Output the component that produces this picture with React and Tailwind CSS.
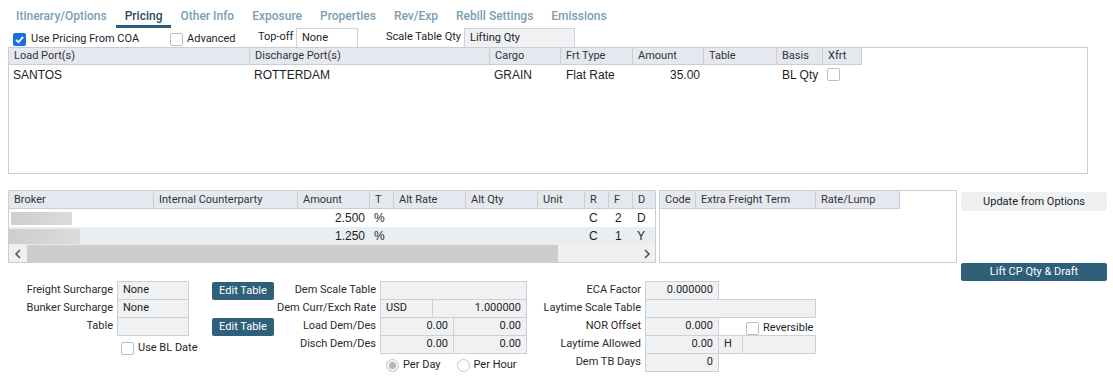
import React from 'react';

const tabs = ['Itinerary/Options', 'Pricing', 'Other Info', 'Exposure', 'Properties', 'Rev/Exp', 'Rebill Settings', 'Emissions'];

const portCols = [
  { label: 'Load Port(s)', w: 'w-[241px]' },
  { label: 'Discharge Port(s)', w: 'w-[240px]' },
  { label: 'Cargo', w: 'w-[71px]' },
  { label: 'Frt Type', w: 'w-[72px]' },
  { label: 'Amount', w: 'w-[71px]' },
  { label: 'Table', w: 'w-[73px]' },
  { label: 'Basis', w: 'w-[46px]' },
  { label: 'Xfrt', w: 'w-[39px]' },
];

const brokerCols = [
  { label: 'Broker', w: 'w-[145px]' },
  { label: 'Internal Counterparty', w: 'w-[144px]' },
  { label: 'Amount', w: 'w-[72px]' },
  { label: 'T', w: 'w-[24px]' },
  { label: 'Alt Rate', w: 'w-[72px]' },
  { label: 'Alt Qty', w: 'w-[72px]' },
  { label: 'Unit', w: 'w-[47px]' },
  { label: 'R', w: 'w-[24px]' },
  { label: 'F', w: 'w-[24px]' },
  { label: 'D', w: 'w-[22px]', last: true },
];

const brokerRows = [
  { blur: 'ml-[2px] w-[61px] h-[13px]', amount: '2.500', r: 'C', f: '2', d: 'D', bg: 'bg-white' },
  { blur: 'w-[71px] h-[15px]', amount: '1.250', r: 'C', f: '1', d: 'Y', bg: 'bg-[#e8eef1]' },
];

const extraCols = [
  { label: 'Code', w: 'w-[36px]' },
  { label: 'Extra Freight Term', w: 'w-[120px]' },
  { label: 'Rate/Lump', w: 'w-[84px]' },
];

const Check = ({ checked, className = '' }) =>
  checked ? (
    <span className={`inline-flex w-[13px] h-[13px] rounded-[2px] bg-[#1a70e2] items-center justify-center shrink-0 ${className}`}>
      <svg width="11" height="11" viewBox="0 0 12 12">
        <path d="M2.2 6.3 L4.9 9 L9.9 3.2" fill="none" stroke="white" strokeWidth="2" />
      </svg>
    </span>
  ) : (
    <span className={`inline-block w-[13px] h-[13px] rounded-[2px] border border-[#b9bec5] bg-white shrink-0 ${className}`} />
  );

const HeaderCell = ({ col }) => (
  <div className={`${col.w} h-full flex items-center pl-[5px] pt-[1px] ${col.last ? '' : 'border-r border-[#c9ced6]'} whitespace-nowrap`}>
    {col.label}
  </div>
);

const Box = ({ w, children, right, first = true }) => (
  <div
    className={`${w} h-[19px] border border-[#cdd1d6] bg-[#f0f1f3] flex items-center px-[5px] text-[#1e1e1e] ${right ? 'justify-end' : ''} ${first ? '' : '-ml-px'}`}
  >
    {children}
  </div>
);

const FormRow = ({ label, lw, children }) => (
  <div className="flex h-[18px] items-start">
    <div className={`${lw} h-[19px] flex items-center justify-end text-[#2a2a2a] whitespace-nowrap`}>{label}</div>
    <div className="ml-[4px] flex items-start">{children}</div>
  </div>
);

const DarkButton = ({ className, children }) => (
  <button className={`bg-[#2f6079] text-white rounded-[2px] flex items-center justify-center ${className}`}>{children}</button>
);

const Chevron = ({ dir }) => (
  <svg width="8" height="10" viewBox="0 0 8 10">
    <path d={dir === 'left' ? 'M6 1 L2 5 L6 9' : 'M2 1 L6 5 L2 9'} fill="none" stroke="#555" strokeWidth="1.6" />
  </svg>
);

export default function App() {
  return (
    <div className="w-[1113px] h-[379px] bg-white text-[11px] text-[#1e1e1e] font-['Roboto',sans-serif] overflow-hidden">
      {/* tabs */}
      <div className="flex h-[28px] pl-[7px]">
        {tabs.map(t => (
          <div
            key={t}
            className={`px-[9px] pt-[6px] flex items-center text-[12px] font-medium border-b-[3px] ${
              t === 'Pricing' ? 'text-[#2c4b5e] border-[#2f5f78]' : 'text-[#7d9db1] border-transparent'
            }`}
          >
            {t}
          </div>
        ))}
      </div>

      {/* options row */}
      <div className="flex h-[19px] items-center">
        <div className="ml-[13px] w-[157px] flex items-center pt-[4px]">
          <Check checked />
          <span className="ml-[5px] whitespace-nowrap">Use Pricing From COA</span>
        </div>
        <div className="w-[88px] flex items-center pt-[4px]">
          <Check />
          <span className="ml-[4px]">Advanced</span>
        </div>
        <div className="w-[38px] whitespace-nowrap">Top-off</div>
        <div className="w-[62px] h-[19px] border-t border-x border-[#cfd3d8] flex items-center pl-[5px]">None</div>
        <div className="w-[28px]" />
        <div className="w-[78px] whitespace-nowrap">Scale Table Qty</div>
        <div className="w-[111px] h-[19px] border-t border-x border-[#cfd3d8] bg-[#f0f1f3] flex items-center pl-[5px]">Lifting Qty</div>
      </div>

      {/* ports grid */}
      <div className="ml-[8px] w-[1080px] h-[127px] border border-[#c9ced6]">
        <div className="flex h-[17px] w-[853px] bg-[#e6e8f0] border-b border-[#c9ced6] text-[#333]">
          {portCols.map(c => (
            <HeaderCell key={c.label} col={c} />
          ))}
        </div>
        <div className="flex h-[19px] items-center text-[12px] font-['Liberation_Sans',sans-serif]">
          <div className="w-[241px] pl-[4px]">SANTOS</div>
          <div className="w-[240px] pl-[4px]">ROTTERDAM</div>
          <div className="w-[71px] pl-[4px]">GRAIN</div>
          <div className="w-[72px] pl-[5px]">Flat Rate</div>
          <div className="w-[71px] pr-[4px] text-right">35.00</div>
          <div className="w-[73px]" />
          <div className="w-[46px] pl-[5px] whitespace-nowrap">BL Qty</div>
          <div className="w-[39px] pl-[4px] flex items-center">
            <Check />
          </div>
        </div>
      </div>

      {/* broker / extra freight / buttons */}
      <div className="flex ml-[8px] mt-[16px] h-[91px] items-start">
        <div className="w-[648px] h-[73px] border border-[#c9ced6] flex flex-col">
          <div className="flex h-[18px] bg-[#e6e8f0] border-b border-[#c9ced6] text-[#333]">
            {brokerCols.map(c => (
              <HeaderCell key={c.label} col={c} />
            ))}
          </div>
          {brokerRows.map((r, i) => (
            <div key={i} className={`flex h-[18px] items-center ${r.bg} text-[12px] font-['Liberation_Sans',sans-serif]`}>
              <div className="w-[145px] flex items-center">
                <div className={`${r.blur} bg-gradient-to-r from-[#cfcfcf] via-[#d4d4d4] to-[#dcdcdc] blur-[0.6px]`} />
              </div>
              <div className="w-[144px]" />
              <div className="w-[72px] text-right pr-[5px]">{r.amount}</div>
              <div className="w-[24px] pl-[4px]">%</div>
              <div className="w-[72px]" />
              <div className="w-[72px]" />
              <div className="w-[47px]" />
              <div className="w-[24px] pl-[4px]">{r.r}</div>
              <div className="w-[24px] pl-[6px]">{r.f}</div>
              <div className="w-[22px] pl-[4px]">{r.d}</div>
            </div>
          ))}
          <div className="flex h-[17px] bg-[#f0f0f0]">
            <div className="w-[18px] flex items-center justify-center">
              <Chevron dir="left" />
            </div>
            <div className="w-[531px] bg-[#cdcdcd]" />
            <div className="flex-1 flex items-center justify-end pr-[4px]">
              <Chevron dir="right" />
            </div>
          </div>
        </div>

        <div className="ml-[3px] w-[298px] h-[73px] border border-[#c9ced6]">
          <div className="flex h-[18px] w-[240px] bg-[#e6e8f0] border-b border-[#c9ced6] text-[#333]">
            {extraCols.map(c => (
              <HeaderCell key={c.label} col={c} />
            ))}
          </div>
        </div>

        <div className="ml-[4px] w-[146px] flex flex-col">
          <button className="mt-[2px] h-[19px] pt-px bg-[#eef0f2] rounded-[2px] text-[#222] flex items-center justify-center">
            Update from Options
          </button>
          <DarkButton className="mt-[52px] h-[18px] pt-px">Lift CP Qty &amp; Draft</DarkButton>
        </div>
      </div>

      {/* form */}
      <div className="flex">
        {/* group A */}
        <div className="w-[274px] flex flex-col">
          <div className="flex h-[18px] items-start">
            <FormRow label="Freight Surcharge" lw="w-[113px]">
              <Box w="w-[72px]">None</Box>
            </FormRow>
            <DarkButton className="ml-[23px] mt-[1px] w-[62px] h-[18px]">Edit Table</DarkButton>
          </div>
          <FormRow label="Bunker Surcharge" lw="w-[113px]">
            <Box w="w-[72px]">None</Box>
          </FormRow>
          <div className="flex h-[18px] items-start">
            <FormRow label="Table" lw="w-[113px]">
              <Box w="w-[72px]" />
            </FormRow>
            <DarkButton className="ml-[23px] mt-[1px] w-[62px] h-[18px]">Edit Table</DarkButton>
          </div>
          <div className="flex items-center ml-[121px] mt-[5px]">
            <Check />
            <span className="ml-[4px]">Use BL Date</span>
          </div>
        </div>

        {/* group B */}
        <div className="w-[253px] flex flex-col">
          <FormRow label="Dem Scale Table" lw="w-[102px]">
            <Box w="w-[147px]" />
          </FormRow>
          <FormRow label="Dem Curr/Exch Rate" lw="w-[102px]">
            <Box w="w-[53px]">USD</Box>
            <Box w="w-[95px]" right first={false}>1.000000</Box>
          </FormRow>
          <FormRow label="Load Dem/Des" lw="w-[102px]">
            <Box w="w-[74px]" right>0.00</Box>
            <Box w="w-[74px]" right first={false}>0.00</Box>
          </FormRow>
          <FormRow label="Disch Dem/Des" lw="w-[102px]">
            <Box w="w-[74px]" right>0.00</Box>
            <Box w="w-[74px]" right first={false}>0.00</Box>
          </FormRow>
          <div className="flex items-center h-[22px] mt-[1px] ml-[112px]">
            <span className="w-[13px] h-[13px] rounded-full border border-[#c2c6cc] bg-[#f2f3f4] flex items-center justify-center">
              <span className="w-[7px] h-[7px] rounded-full bg-[#b3b7bd]" />
            </span>
            <span className="ml-[4px]">Per Day</span>
            <span className="ml-[16px] w-[13px] h-[13px] rounded-full border border-[#c2c6cc] bg-white" />
            <span className="ml-[4px]">Per Hour</span>
          </div>
        </div>

        {/* group C */}
        <div className="flex flex-col">
          <FormRow label="ECA Factor" lw="w-[114px]">
            <Box w="w-[74px]" right>0.000000</Box>
          </FormRow>
          <FormRow label="Laytime Scale Table" lw="w-[114px]">
            <Box w="w-[171px]" />
          </FormRow>
          <div className="flex h-[18px] items-start">
            <FormRow label="NOR Offset" lw="w-[114px]">
              <Box w="w-[74px]" right>0.000</Box>
            </FormRow>
            <div className="ml-[27px] mt-[3px] flex items-center">
              <Check />
              <span className="ml-[4px]">Reversible</span>
            </div>
          </div>
          <FormRow label="Laytime Allowed" lw="w-[114px]">
            <Box w="w-[74px]" right>0.00</Box>
            <Box w="w-[25px]" first={false}>H</Box>
            <Box w="w-[74px]" first={false} />
          </FormRow>
          <FormRow label="Dem TB Days" lw="w-[114px]">
            <Box w="w-[74px]" right>0</Box>
          </FormRow>
        </div>
      </div>
    </div>
  );
}
